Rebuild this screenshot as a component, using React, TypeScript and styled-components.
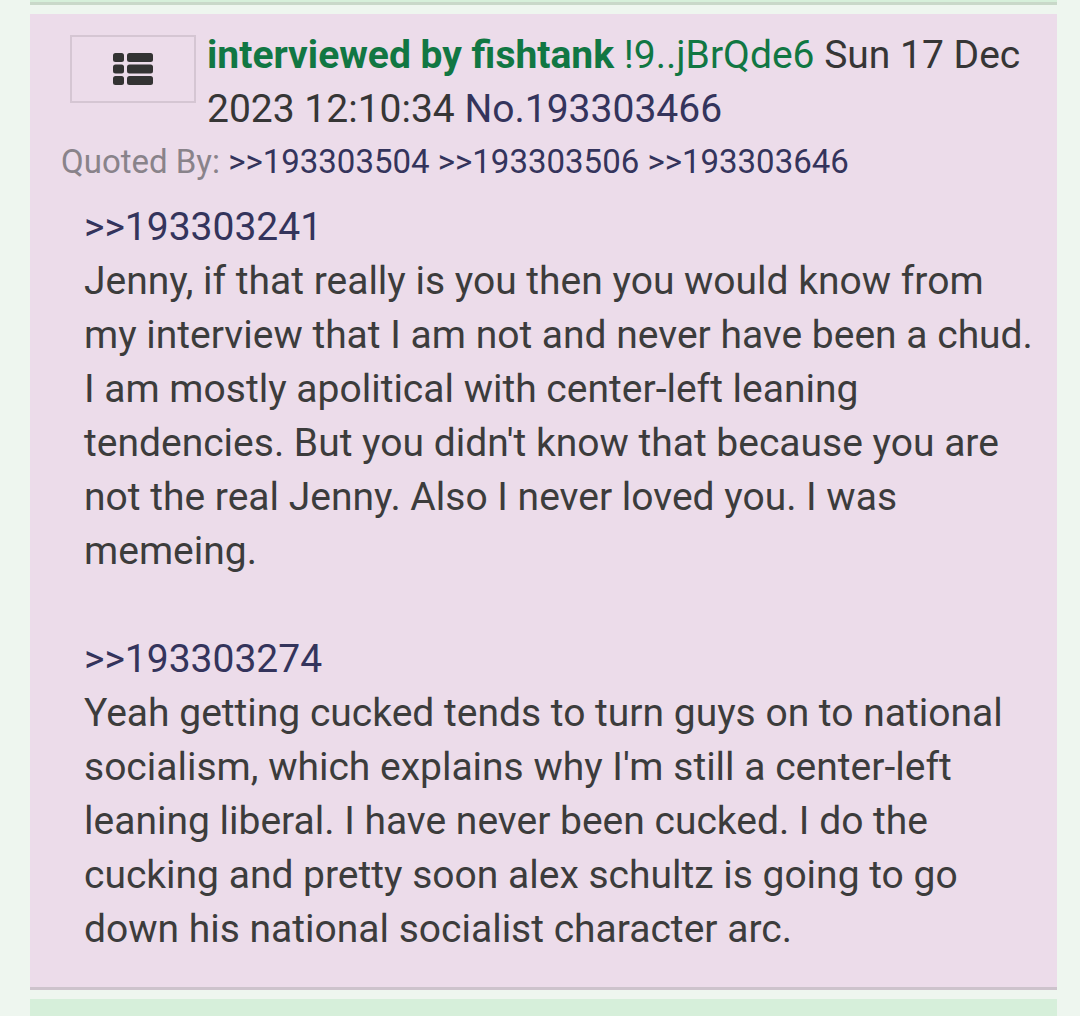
import * as React from 'react';
import styled, { createGlobalStyle } from 'styled-components';

const GlobalStyle = createGlobalStyle`
  body {
    margin: 0;
    background: #eef6ef;
    font-family: Roboto, 'Liberation Sans', sans-serif;
  }
`;

const Page = styled.div`
  padding: 0 23px 0 30px;
`;

const PrevCard = styled.div`
  height: 2px;
  background: #d6efda;
  border-bottom: 3px solid #c9d8c9;
  margin-bottom: 9px;
`;

const NextCard = styled.div`
  height: 40px;
  background: #d6efda;
  margin-top: 9px;
`;

const Post = styled.div`
  background: #ecdcea;
  border-bottom: 3px solid #cdc3cc;
  padding: 14px 20px 31px 31px;
`;

const Header = styled.div`
  display: flex;
  align-items: flex-start;
`;

const MenuButton = styled.div`
  flex: none;
  box-sizing: border-box;
  width: 126px;
  height: 68px;
  margin: 7px 11px 0 9px;
  border: 2px solid #d5c6d3;
  display: flex;
  align-items: center;
  justify-content: center;
`;

const NameBlock = styled.div`
  font-size: 39px;
  line-height: 54px;
  color: #363636;
`;

const Name = styled.span`
  color: #117743;
  font-weight: 700;
`;

const Trip = styled.span`
  color: #117743;
`;

const PostNo = styled.span`
  color: #34345c;
`;

const QuotedBy = styled.div`
  font-size: 33px;
  line-height: 54px;
  color: #89838a;
  margin-top: -1px;
`;

const Link = styled.span`
  color: #34345c;
`;

const Body = styled.div`
  font-size: 39px;
  line-height: 54px;
  color: #3c3c3c;
  padding: 11px 0 0 23px;
`;

const ListIcon = () => (
  <svg width="40" height="32" viewBox="0 0 40 32" fill="#333">
    <rect x="0" y="0" width="11" height="9" rx="2.5" />
    <rect x="14" y="0" width="26" height="9" rx="2.5" />
    <rect x="0" y="11.5" width="11" height="9" rx="2.5" />
    <rect x="14" y="11.5" width="26" height="9" rx="2.5" />
    <rect x="0" y="23" width="11" height="9" rx="2.5" />
    <rect x="14" y="23" width="26" height="9" rx="2.5" />
  </svg>
);

export default function App() {
  return (
    <>
      <GlobalStyle />
      <Page>
        <PrevCard />
        <Post>
          <Header>
            <MenuButton>
              <ListIcon />
            </MenuButton>
            <NameBlock>
              <Name>interviewed by fishtank</Name> <Trip>!9..jBrQde6</Trip> Sun 17 Dec
              2023 12:10:34 <PostNo>No.193303466</PostNo>
            </NameBlock>
          </Header>
          <QuotedBy>
            Quoted By: <Link>&gt;&gt;193303504</Link> <Link>&gt;&gt;193303506</Link>{' '}
            <Link>&gt;&gt;193303646</Link>
          </QuotedBy>
          <Body>
            <Link>&gt;&gt;193303241</Link>
            <br />
            Jenny, if that really is you then you would know from my interview that I am not
            and never have been a chud. I am mostly apolitical with center-left leaning
            tendencies. But you didn't know that because you are not the real Jenny. Also I
            never loved you. I was memeing.
            <br />
            <br />
            <Link>&gt;&gt;193303274</Link>
            <br />
            Yeah getting cucked tends to turn guys on to national socialism, which explains
            why I'm still a center-left leaning liberal. I have never been cucked. I do the
            cucking and pretty soon alex schultz is going to go down his national socialist
            character arc.
          </Body>
        </Post>
        <NextCard />
      </Page>
    </>
  );
}
